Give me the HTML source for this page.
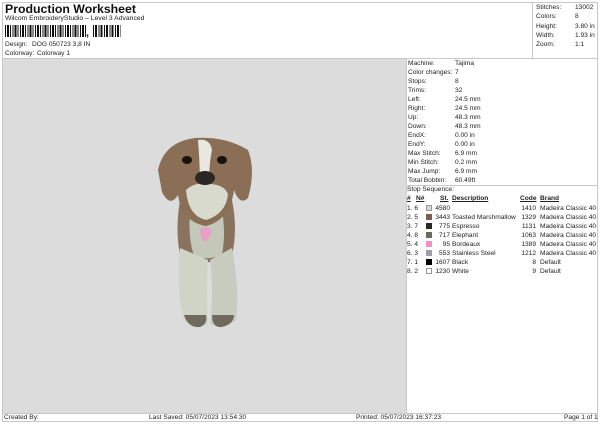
<!DOCTYPE html>
<html><head><meta charset="utf-8"><style>
*{margin:0;padding:0;box-sizing:border-box}
body{width:600px;height:424px;background:#fff;font-family:"Liberation Sans",sans-serif;color:#222;position:relative;overflow:hidden;font-size:6.6px}
.a{position:absolute;white-space:nowrap}
.box{position:absolute;border:1px solid #c8c8c8}
</style></head><body>
<div class="box" style="left:2px;top:2px;width:596px;height:420px"></div>
<div class="a" style="left:532px;top:2px;width:1px;height:56px;background:#c8c8c8"></div>
<div class="a" style="left:5px;top:2px;font-size:12.3px;font-weight:bold;color:#111">Production Worksheet</div>
<div class="a" style="left:5px;top:15px;font-size:6.8px">Wilcom EmbroideryStudio – Level 3 Advanced</div>
<div class="a" style="left:5px;top:25px;width:81px;height:12px;background:repeating-linear-gradient(90deg,#111 0 1px,#fff 1px 2px,#111 2px 4px,#fff 4px 5px,#111 5px 6px,#fff 6px 7.5px)"></div>
<div class="a" style="left:86px;top:27px;font-size:11px;font-weight:bold">,</div>
<div class="a" style="left:93px;top:25px;width:28px;height:12px;background:repeating-linear-gradient(90deg,#111 0 1px,#fff 1px 2px,#111 2px 4px,#fff 4px 5.5px)"></div>
<div class="a" style="left:5px;top:41px">Design:</div><div class="a" style="left:32px;top:41px">DOG 050723 3,8 IN</div>
<div class="a" style="left:5px;top:50px">Colorway:</div><div class="a" style="left:37px;top:50px">Colorway 1</div>
<div class="a" style="left:536px;top:3px;line-height:9.3px">Stitches:<br>Colors:<br>Height:<br>Width:<br>Zoom:</div>
<div class="a" style="left:575px;top:3px;line-height:9.3px">13002<br>8<br>3.80 in<br>1.93 in<br>1:1</div>
<div class="a" style="left:3px;top:58px;width:594px;height:1px;background:#c8c8c8"></div>
<div class="a" style="left:3px;top:59px;width:403px;height:354px;background:#dcdcdc"></div>
<div class="a" style="left:406px;top:59px;width:1px;height:354px;background:#c8c8c8"></div>
<div class="a" style="left:408px;top:59px;line-height:9px">Machine:<br>Color changes:<br>Stops:<br>Trims:<br>Left:<br>Right:<br>Up:<br>Down:<br>EndX:<br>EndY:<br>Max Stitch:<br>Min Stitch:<br>Max Jump:<br>Total Bobbin:</div>
<div class="a" style="left:455px;top:59px;line-height:9px">Tajima<br>7<br>8<br>32<br>24.5 mm<br>24.5 mm<br>48.3 mm<br>48.3 mm<br>0.00 in<br>0.00 in<br>6.9 mm<br>0.2 mm<br>6.9 mm<br>60.49ft</div>
<div class="a" style="left:407px;top:185px;width:190px;height:1px;background:#c8c8c8"></div>
<div class="a" style="left:407px;top:186px">Stop Sequence:</div>
<div class="a" style="left:407px;top:195px;font-weight:bold;text-decoration:underline">#</div>
<div class="a" style="left:416px;top:195px;font-weight:bold;text-decoration:underline">N#</div>
<div class="a" style="left:440px;top:195px;font-weight:bold;text-decoration:underline">St.</div>
<div class="a" style="left:452px;top:195px;font-weight:bold;text-decoration:underline">Description</div>
<div class="a" style="left:520px;top:195px;font-weight:bold;text-decoration:underline">Code</div>
<div class="a" style="left:540px;top:195px;font-weight:bold;text-decoration:underline">Brand</div>
<div class="a" style="left:407px;top:204px;line-height:9px">1. 6<br>2. 5<br>3. 7<br>4. 8<br>5. 4<br>6. 3<br>7. 1<br>8. 2</div>
<div class="a" style="left:426px;top:205px;width:6px;height:6px;background:#d8d8d0;border:1px solid #999"></div>
<div class="a" style="left:426px;top:214px;width:6px;height:6px;background:#7a5e4e"></div>
<div class="a" style="left:426px;top:223px;width:6px;height:6px;background:#2a2622"></div>
<div class="a" style="left:426px;top:232px;width:6px;height:6px;background:#6e6b5e"></div>
<div class="a" style="left:426px;top:241px;width:6px;height:6px;background:#f090c8"></div>
<div class="a" style="left:426px;top:250px;width:6px;height:6px;background:#9aa0a8"></div>
<div class="a" style="left:426px;top:259px;width:6px;height:6px;background:#000"></div>
<div class="a" style="left:426px;top:268px;width:6px;height:6px;background:#fff;border:1px solid #999"></div>
<div class="a" style="left:433px;top:204px;width:17px;text-align:right;line-height:9px">4580<br>3443<br>775<br>717<br>95<br>553<br>1607<br>1230</div>
<div class="a" style="left:452px;top:204px;line-height:9px"><br>Toasted Marshmallow<br>Espresso<br>Elephant<br>Bordeaux<br>Stainless Steel<br>Black<br>White</div>
<div class="a" style="left:518px;top:204px;width:18px;text-align:right;line-height:9px">1410<br>1329<br>1131<br>1063<br>1389<br>1212<br>8<br>9</div>
<div class="a" style="left:540px;top:204px;line-height:9px">Madeira Classic 40<br>Madeira Classic 40<br>Madeira Classic 40<br>Madeira Classic 40<br>Madeira Classic 40<br>Madeira Classic 40<br>Default<br>Default</div>
<div class="a" style="left:3px;top:413px;width:594px;height:1px;background:#c8c8c8"></div>
<div class="a" style="left:4px;top:414px">Created By:</div>
<div class="a" style="left:149px;top:414px">Last Saved: 05/07/2023 13:54:30</div>
<div class="a" style="left:356px;top:414px">Printed: 05/07/2023 16:37:23</div>
<div class="a" style="left:564px;top:414px">Page 1 of 1</div>
<svg class="a" style="left:150px;top:130px" width="110" height="205" viewBox="0 0 110 205">
<path d="M30 70 Q25 100 30 125 Q55 140 82 125 Q88 100 82 70 Z" fill="#8a735e"/>
<path d="M40 80 Q38 110 44 125 Q58 132 72 124 Q76 105 72 80 Z" fill="#c4c8b8"/>
<path d="M30 118 Q26 160 34 190 Q44 200 58 194 Q56 160 58 130 Z" fill="#d0d4c6"/>
<path d="M60 130 Q64 160 60 194 Q74 200 86 190 Q90 160 82 118 Z" fill="#c8ccbe"/>
<path d="M8 40 Q14 12 45 8 Q75 6 98 20 Q106 40 98 68 Q90 76 84 60 Q80 90 56 96 Q32 92 28 65 Q20 78 12 62 Z" fill="#8a6e56"/>
<path d="M48 10 Q60 8 62 20 Q58 40 60 55 L50 55 Q50 35 48 10 Z" fill="#e8e8e0"/>
<path d="M36 60 Q44 52 58 54 Q74 54 78 64 Q76 84 56 90 Q38 86 36 60 Z" fill="#d8dace"/>
<ellipse cx="37" cy="30" rx="5" ry="4" fill="#1a1410"/><ellipse cx="72" cy="30" rx="5" ry="4" fill="#1a1410"/>
<ellipse cx="55" cy="48" rx="10" ry="7" fill="#2a2622"/>
<path d="M50 100 Q56 95 62 100 Q60 110 55 112 Q50 108 50 100Z" fill="#e8a0c8"/>
<path d="M34 185 Q38 198 50 197 Q58 194 56 185 Z" fill="#6e6b5e"/>
<path d="M62 185 Q62 198 72 197 Q84 194 84 185 Z" fill="#6e6b5e"/>
</svg>
</body></html>
